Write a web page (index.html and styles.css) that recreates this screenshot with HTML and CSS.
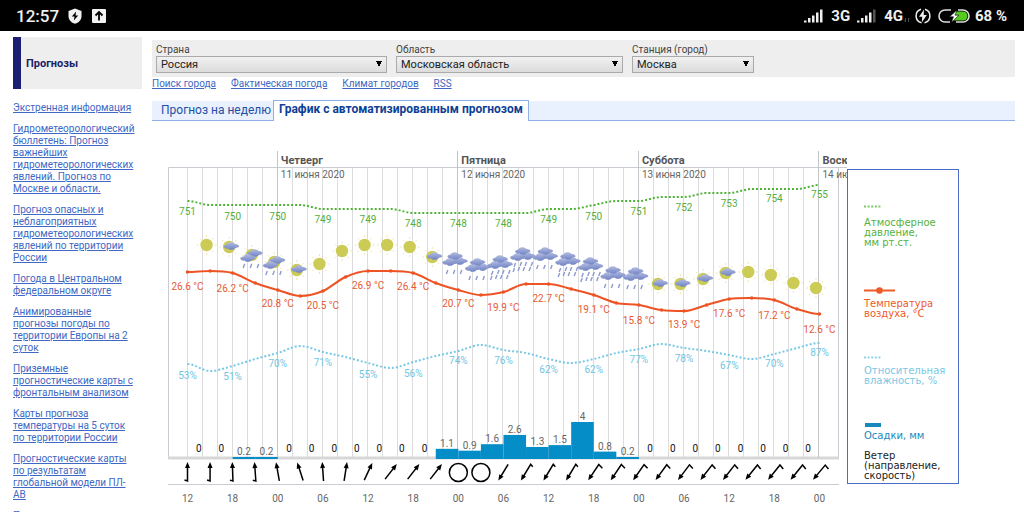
FILE: index.html
```html
<!DOCTYPE html>
<html lang="ru">
<head>
<meta charset="utf-8">
<meta name="viewport" content="width=device-width, initial-scale=1">
<title>Прогнозы</title>
<link rel="stylesheet" href="styles.css">
</head>
<body>
<div class="screen">
  <header class="status">
    <span class="status-time">12:57</span>
    <svg class="ico-shield" width="14" height="16" viewBox="0 0 14 16"><path d="M7 0.500L13.500 3V8C13.500 12 10.500 14.700 7 15.700 3.500 14.700 .5 12 .5 8V3Z" fill="#f2f2f2"/><path d="M8.200 3.500L3.800 8.600H6.500L5.800 12.500 10.200 7.400H7.500Z" fill="#000"/></svg>
    <svg class="ico-up" width="14" height="14" viewBox="0 0 14 14"><rect width="14" height="14" rx="1" fill="#f2f2f2"/><path d="M7 11.500V3.500M3.500 6.500L7 3 10.500 6.500" fill="none" stroke="#000" stroke-width="1.800"/></svg>
    <div class="status-right">
      <svg width="20" height="14" viewBox="0 0 20 14" fill="#eee"><rect x="0" y="11.500" width="2.500" height="2"/><rect x="4" y="9" width="2.500" height="4.500"/><rect x="8" y="6.500" width="2.500" height="7"/><rect x="12" y="3.500" width="2.500" height="10"/><rect x="16" y=".5" width="2.500" height="13"/></svg>
      <span class="net">3G</span>
      <svg width="20" height="14" viewBox="0 0 20 14" fill="#eee"><rect x="0" y="11.500" width="2.500" height="2"/><rect x="4" y="9" width="2.500" height="4.500"/><rect x="8" y="6.500" width="2.500" height="7"/><rect x="12" y="3.500" width="2.500" height="10"/><rect x="16" y=".5" width="2.500" height="13" fill="#555"/></svg>
      <span class="net">4G</span>
      <svg class="ico-data" width="6" height="14" viewBox="0 0 6 14" fill="none" stroke="#4a4a4a"><path d="M1.500 9V13M.5 11.500L1.500 13M4.500 13V9L5.500 10"/></svg>
      <svg class="ico-bolt" width="16" height="16" viewBox="0 0 16 16"><path d="M6 1.300A7 7 0 0 0 6.500 14.800M10 1.300A7 7 0 0 1 9.500 14.800" fill="none" stroke="#eee" stroke-width="1.500"/><path d="M9 1.500L4 8.800H7.200L6.800 14.500 11.800 7H8.700Z" fill="#eee"/></svg>
      <svg class="ico-battery" width="32" height="14" viewBox="0 0 32 14"><path d="M17 2.500H25A4.500 4.500 0 0 1 25 11.500H14Z" fill="#55c91e"/><path d="M13 1H7A6 6 0 0 0 7 13H12M20 1H25A6 6 0 0 1 25 13H18" fill="none" stroke="#ddd" stroke-width="1.600"/><path d="M19 1L11.500 7.800H15.500L13.500 13.500 21 6.200H17Z" fill="#fff" stroke="#000" stroke-width=".6"/></svg>
      <span>68 %</span>
    </div>
  </header>

  <div class="page">
    <aside class="sidebar">
      <h2 class="side-title">Прогнозы</h2>
      <nav class="side-links">
        <a href="#">Экстренная информация</a>
        <a href="#">Гидрометеорологический бюллетень: Прогноз важнейших гидрометеорологических явлений. Прогноз по Москве и области.</a>
        <a href="#">Прогноз опасных и неблагоприятных гидрометеорологических явлений по территории России</a>
        <a href="#">Погода в Центральном федеральном округе</a>
        <a href="#">Анимированные прогнозы погоды по территории Европы на 2 суток</a>
        <a href="#">Приземные прогностические карты с фронтальным анализом</a>
        <a href="#">Карты прогноза температуры на 5 суток по территории России</a>
        <a href="#">Прогностические карты по результатам глобальной модели ПЛ-АВ</a>
        <a href="#">Прогностические карты</a>
      </nav>
    </aside>

    <main class="main">
      <form class="filters">
        <div class="field country"><label for="country">Страна</label><select id="country"><option>Россия</option></select></div>
        <div class="field region"><label for="region">Область</label><select id="region"><option>Московская область</option></select></div>
        <div class="field city"><label for="city">Станция (город)</label><select id="city"><option>Москва</option></select></div>
      </form>
      <nav class="quick">
        <a href="#">Поиск города</a><a href="#">Фактическая погода</a><a href="#">Климат городов</a><a href="#">RSS</a>
      </nav>
      <nav class="tabs">
        <a class="tab" href="#">Прогноз на неделю</a>
        <a class="tab tab-active" href="#">График с автоматизированным прогнозом</a>
      </nav>

      <section class="forecast">
        <svg id="chart" class="chart" width="679" height="366" viewBox="168 146 679 366" role="img" aria-label="График прогноза погоды">
          <defs>
            <linearGradient id="cloudFill" x1="0" y1="0" x2="0" y2="1"><stop offset="0" stop-color="#b4bde0"/><stop offset="1" stop-color="#6f82c4"/></linearGradient>
            <g id="sun"><path d="M0-10V-8M0 10V8M-10 0H-8M10 0H8M-7-7L-5.500-5.500M7-7L5.500-5.500M-7 7L-5.500 5.500M7 7L5.500 5.500" stroke="#e9e9b4"/><circle r="6.200" fill="#cbcb55"/></g>
            <path id="cloud" d="M-7.500 .5C-7-1-5-1.500-4-1.500-3.500-4.500 2-4.500 4-2 6-2.200 8-.8 8 .5 7 1.500 5 1.300 4 2.300 2 4.300-2 4.300-3 2.500-5 3-7 2-7.500 .5Z" fill="url(#cloudFill)"/>
            <path id="drop" d="M1-2L-.5 2" stroke="#8c9ad0" stroke-width="1.400"/>
            <g id="suncloud"><use href="#sun"/><use href="#cloud" x="2" y="-1"/></g>
            <g id="sunrain"><use href="#sun"/><use href="#cloud" x="3" y="-2"/><use href="#cloud" x="-4" y="3"/><use href="#drop" x="-8" y="11"/><use href="#drop" x="-1" y="11"/><use href="#drop" x="6" y="11"/></g>
            <g id="clouds"><use href="#cloud" x="-5" y="3"/><use href="#cloud" x="5" y="2"/><use href="#cloud" y="-3"/></g>
            <g id="rain"><use href="#clouds"/><use href="#drop" x="-8" y="13"/><use href="#drop" x="-1" y="13"/><use href="#drop" x="6" y="13"/></g>
            <g id="heavy"><use href="#clouds"/><use href="#drop" x="-8" y="11"/><use href="#drop" x="-2" y="10"/><use href="#drop" x="3" y="10"/><use href="#drop" x="9" y="10"/><use href="#drop" x="-9" y="16"/><use href="#drop" x="-4" y="15"/><use href="#drop" x="1" y="15"/><use href="#drop" x="7" y="15"/></g>
          </defs>
        </svg>
        <aside class="legend">
          <div class="key pressure"><svg width="17" height="3"><path d="M0 1.500H17" stroke="#7cc768" stroke-width="2" stroke-dasharray="2 1.600"/></svg><p>Атмосферное<br>давление,<br>мм рт.ст.</p></div>
          <div class="key temp"><svg width="31" height="7"><path d="M0 3.500H31" stroke="#ee5a28" stroke-width="2"/><circle cx="15.500" cy="3.500" r="3.300" fill="#ee5a28"/></svg><p>Температура<br>воздуха, °C</p></div>
          <div class="key humidity"><svg width="17" height="3"><path d="M0 1.500H17" stroke="#8fd3ea" stroke-width="2" stroke-dasharray="2 1.600"/></svg><p>Относительная<br>влажность, %</p></div>
          <div class="key rainfall"><svg width="17" height="4"><rect x="1" width="16" height="4" fill="#1889bd"/></svg><p>Осадки, мм</p></div>
          <div class="key wind"><p>Ветер<br>(направление,<br>скорость)</p></div>
        </aside>
      </section>
    </main>
  </div>
</div>
<script src="chart.js"></script>
</body>
</html>
```
FILE: styles.css
```css
* { box-sizing: border-box; }
body { margin: 0; background: #fff; font-family: Roboto, "Liberation Sans", sans-serif; }
.screen { height: 100vh; overflow: hidden; }
a { color: #4068c4; }

.status { display: flex; align-items: center; height: 31px; padding: 0 17px 0 16px; background: #000; color: #f0f0f0; font-size: 16px; font-weight: 500; }
.status-time { font-size: 17px; margin-right: 9px; }
.ico-up { margin-left: 10px; }
.status-right { display: flex; align-items: center; margin-left: auto; font-size: 15px; font-weight: 700; }
.net { margin: 0 7px; }
.ico-data { margin-left: -6px; }
.ico-bolt { margin-left: 5px; }
.ico-battery { margin: 0 5px 0 7px; }

.page { display: flex; gap: 10px; padding: 0 9px 0 13px; }
.sidebar { flex: 0 0 129px; padding-top: 6px; }
.side-title { display: flex; align-items: center; height: 52px; margin: 0 0 13px; padding-left: 5px; border-left: 8px solid #1a1f71; background: #eee; color: #1a1f66; font-size: 11px; font-weight: 700; }
.side-links { display: flex; flex-direction: column; gap: 9px; padding-right: 5px; font-size: 10px; line-height: 12px; }

.main { flex: 1; min-width: 0; padding-top: 9px; }
.filters { display: flex; gap: 9px; height: 37px; padding: 4px 4px 0; background: #eee; }
.field { display: flex; flex-direction: column; }
.country { flex: 0 1 231px; }
.region { flex: 0 1 227px; }
.city { flex: 0 1 122px; }
.field label { font-size: 10px; line-height: 12px; color: #444; }
.field select {
  appearance: none;
  height: 17px;
  padding: 0 4px;
  border: 1px solid #aaa;
  border-radius: 0;
  color: #222;
  font: 11px/14px Roboto, sans-serif;
  background:
    linear-gradient(to bottom left, #000 50%, transparent 50%) right 7px top 4px / 3px 6px no-repeat,
    linear-gradient(to bottom right, #000 50%, transparent 50%) right 4px top 4px / 3px 6px no-repeat,
    linear-gradient(#f1f1f1, #dcdcdc);
}
.quick { display: flex; gap: 15px; padding-top: 1px; font-size: 10px; line-height: 12px; }
.tabs { display: flex; align-items: flex-end; height: 21px; margin-top: 10px; padding-left: 9px; border-bottom: 1px solid #8fb0e4; background: linear-gradient(#fff 1px, #e8f1fd 1px); font-size: 12px; }
.tab { padding-right: 2px; line-height: 20px; color: #1d4fa6; text-decoration: none; }
.tab-active { height: 21px; margin-bottom: -1px; padding: 0 5px; border: 1px solid #8fb0e4; border-bottom: 0; background: #fff; color: #0d3f96; font-weight: 700; line-height: 17px; }

.forecast { display: flex; align-items: flex-start; padding-left: 16px; margin-top: 25px; }
.chart { flex: none; display: block; font-size: 10px; }
.legend { flex: 0 0 112px; height: 315px; margin-top: 23px; padding: 35px 0 0 16px; border: 1px solid #4a6cc8; background: #fff; font: 10px/10px "DejaVu Sans", sans-serif; }
.key p { margin: 0; white-space: nowrap; }
.key svg { display: block; }
.pressure { color: #55b23c; height: 82px; }
.pressure p { padding-top: 10px; }
.temp { color: #ee5a28; height: 69px; }
.temp p { padding-top: 5px; }
.humidity { color: #78c8e6; height: 67px; }
.humidity p { padding-top: 7px; }
.rainfall { color: #1889bd; height: 28px; }
.rainfall p { padding-top: 4px; }
.wind { color: #222; }

.grid { stroke: #dcdcdf; }
.frame { stroke: #c9ccd2; fill: none; }
.day { stroke: #c2c5ca; stroke-width: 1; }
.base { stroke: #d7d7d7; stroke-width: 3; }
.series { fill: none; }
.s-pressure { stroke: #4db333; stroke-width: 2; stroke-dasharray: 2 2; }
.s-temp { stroke: #ee5324; stroke-width: 2; }
.s-humidity { stroke: #76c8e4; stroke-width: 2; stroke-dasharray: 2 2; }
.point { fill: #ee5324; }
.bar { fill: #058dc7; }
.arrow { stroke: #000; stroke-width: 1.5; fill: none; }
.calm { stroke: #000; stroke-width: 1.5; fill: none; }
.t { text-anchor: middle; }
.t-pressure { fill: #55ae3c; }
.t-temp { fill: #e85a32; }
.t-humidity { fill: #70c6e2; }
.t-rain { fill: #666; }
.t-zero { fill: #111; }
.t-hour { fill: #666; }
.t-day { fill: #555; font-size: 11px; font-weight: 700; }
.t-date { fill: #666; }
```
FILE: chart.js
```js
const svg = document.getElementById('chart');
const NS = 'http://www.w3.org/2000/svg';
const X0 = 187.5, STEP = 22.57;
const x = i => X0 + i * STEP;

function add(name, attrs, text) {
  const el = document.createElementNS(NS, name);
  for (const k in attrs) el.setAttribute(k, attrs[k]);
  if (text !== undefined) el.textContent = text;
  svg.appendChild(el);
}

// Smooth curve whose tangents are flat at local extremes.
function spline(ys) {
  const slope = ys.map((y, i) => {
    if (i === 0 || i === ys.length - 1) return 0;
    const a = y - ys[i - 1], b = ys[i + 1] - y;
    return a * b <= 0 ? 0 : (a + b) / 2;
  });
  let d = `M${x(0)} ${ys[0]}`;
  for (let i = 1; i < ys.length; i++) {
    d += `C${x(i - 2 / 3)} ${ys[i - 1] + slope[i - 1] / 3} ${x(i - 1 / 3)} ${ys[i] - slope[i] / 3} ${x(i)} ${ys[i]}`;
  }
  return d;
}

const days = [[4, 'Четверг', '11 июня 2020'], [12, 'Пятница', '12 июня 2020'], [20, 'Суббота', '13 июня 2020'], [28, 'Воскресенье', '14 июня 2020']];
const pressure = [201, 205, 205, 205, 205, 205, 209, 209, 209, 209, 213, 213, 213, 213, 213, 213, 209, 209, 205, 201, 201, 197, 197, 193, 193, 189, 189, 189, 185];
const temp = [272, 271, 273, 283, 290, 296, 291, 277, 271, 271, 273, 283, 290, 295, 292, 284, 284, 289, 295, 303, 305, 310, 311, 305, 299, 298, 300, 309, 314];
const humidity = [364, 371, 366, 359, 353, 346, 352, 357, 363, 368, 362, 356, 351, 345, 350, 353, 359, 363, 359, 353, 349, 344, 348, 351, 355, 359, 354, 348, 343];
const rain = [0, 0, .2, .2, 0, 0, 0, 0, 0, 0, 0, 1.1, .9, 1.6, 2.6, 1.3, 1.5, 4, .8, .2, 0, 0, 0, 0, 0, 0, 0, 0];

const pressureLabels = [[751, 215], [750, 220], [750, 220], [749, 223], [749, 223], [748, 227], [748, 227], [748, 227], [749, 223], [750, 220], [751, 215], [752, 211], [753, 207], [754, 202], [755, 198]];
const tempLabels = [['26.6', 290], ['26.2', 292], ['20.8', 307], ['20.5', 309], ['26.9', 289], ['26.4', 290], ['20.7', 307], ['19.9', 311], ['22.7', 302], ['19.1', 313], ['15.8', 324], ['13.9', 328], ['17.6', 317], ['17.2', 319], ['12.6', 333]];
const humidityLabels = [[53, 379], [51, 380], [70, 367], [71, 366], [55, 378], [56, 377], [74, 364], [76, 364], [62, 373], [62, 373], [77, 363], [78, 362], [67, 369], [70, 367], [87, 356]];

const weather = [['sun', 245], ['suncloud', 247], ['sunrain', 255], ['sunrain', 262], ['suncloud', 270], ['sun', 264], ['sun', 251], ['sun', 245], ['sun', 245], ['sun', 247], ['suncloud', 257], ['rain', 259], ['rain', 265], ['heavy', 262], ['heavy', 254], ['rain', 254], ['heavy', 259], ['heavy', 264], ['rain', 273], ['rain', 274], ['suncloud', 284], ['suncloud', 284], ['suncloud', 279], ['suncloud', 273], ['sun', 272], ['sun', 275], ['sun', 283], ['sun', 288]];

// Wind: [direction of the arrow in degrees, length of the speed barb]; null is calm.
const wind = [[0, 3], [0, 3], [-2, 3], [-4, 3], [-10, 0], [-18, 0], [-4, 0], [9, 0], [25, 0], [38, 0], [38, 0], [38, 0], null, null, [211, 0], [211, 3], [211, 3], [211, 3], [214, 5], [214, 5], [215, 5], [216, 5], [217, 5], [218, 5], [218, 5], [219, 5], [219, 5], [219, 5], [220, 5]];

for (let k = 0; k <= 42; k++) {
  const gx = Math.round(X0 + k * STEP * 2 / 3) - .5;
  add('path', { class: 'grid', d: `M${gx} 168V457` });
}
add('path', { class: 'frame', d: 'M168.5 458V167.500H847M838.5 168V458M168 484.500H839' });
add('path', { class: 'base', d: 'M168 458H839' });
days.forEach(([i, day, date]) => {
  const dx = Math.round(x(i)) - .5;
  add('path', { class: 'day', d: `M${dx} 151V458` });
  add('text', { class: 't-day', x: x(i) + 3, y: 164 }, day);
  add('text', { class: 't-date', x: x(i) + 3, y: 178 }, date);
});

rain.forEach((v, i) => {
  const top = 459 - v * 9.25;
  if (v) add('rect', { class: 'bar', x: x(i), y: v < .5 ? 457 : top, width: STEP, height: v < .5 ? 2 : v * 9.25 });
  add('text', { class: v ? 't t-rain' : 't t-zero', x: x(i + .5), y: v ? Math.min(top - 2, 455) : 452 }, v);
});

add('path', { class: 'series s-pressure', d: spline(pressure) });
add('path', { class: 'series s-humidity', d: spline(humidity) });
weather.forEach(([kind, y], i) => add('use', { href: '#' + kind, x: x(i + 1) - 3.5, y }));
add('path', { class: 'series s-temp', d: spline(temp) });
temp.forEach((y, i) => add('circle', { class: 'point', cx: x(i), cy: y, r: 1.8 }));

pressureLabels.forEach(([v, y], i) => add('text', { class: 't t-pressure', x: x(i * 2), y }, v));
tempLabels.forEach(([v, y], i) => add('text', { class: 't t-temp', x: x(i * 2), y }, v + ' °C'));
humidityLabels.forEach(([v, y], i) => add('text', { class: 't t-humidity', x: x(i * 2), y }, v + '%'));

wind.forEach((w, i) => {
  if (!w) {
    add('circle', { class: 'calm', cx: x(i), cy: 472.5, r: 9 });
    return;
  }
  const transform = `translate(${x(i)} 472) rotate(${w[0]})`;
  add('path', { class: 'arrow', transform, d: `M0-7V9${w[1] ? `L${-w[1]} 8` : ''}` });
  add('path', { transform, d: 'M0-10L2.500-4H-2.500Z' });
});

['12', '18', '00', '06', '12', '18', '00', '06', '12', '18', '00', '06', '12', '18', '00']
  .forEach((h, i) => add('text', { class: 't t-hour', x: x(i * 2), y: 502 }, h));
```
